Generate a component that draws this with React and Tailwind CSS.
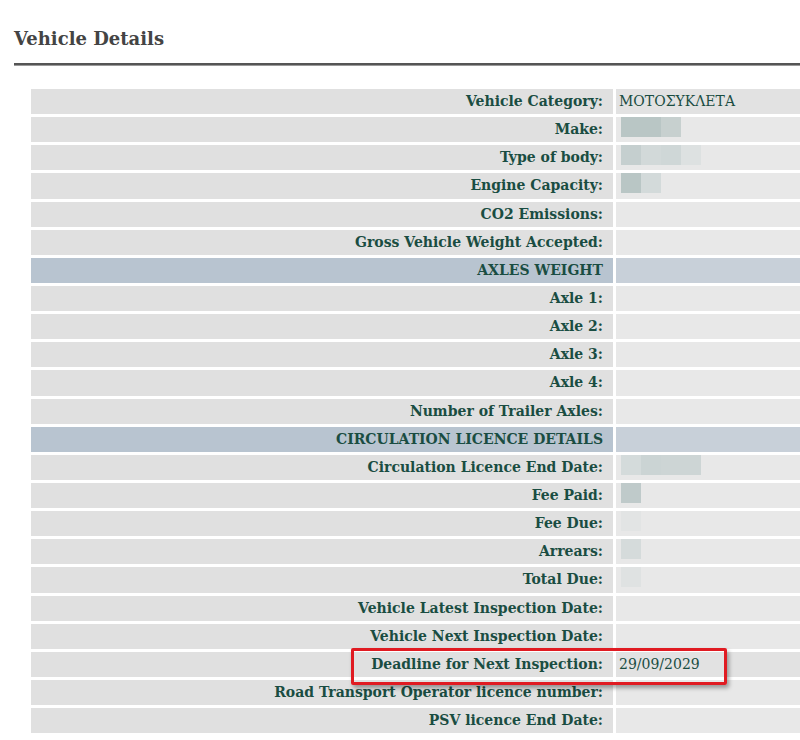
import React from "react";

const rows = [
  { label: "Vehicle Category:", value: "ΜΟΤΟΣΥΚΛΕΤΑ" },
  { label: "Make:", blur: [["#b9c6c5", 40], ["#c7d0cf", 20]] },
  { label: "Type of body:", blur: [["#c5cfcf", 20], ["#d2d9d9", 20], ["#cfd7d7", 20], ["#dde1e1", 20]] },
  { label: "Engine Capacity:", blur: [["#b9c6c5", 20], ["#d3dada", 20]] },
  { label: "CO2 Emissions:" },
  { label: "Gross Vehicle Weight Accepted:" },
  { label: "AXLES WEIGHT", header: true },
  { label: "Axle 1:" },
  { label: "Axle 2:" },
  { label: "Axle 3:" },
  { label: "Axle 4:" },
  { label: "Number of Trailer Axles:" },
  { label: "CIRCULATION LICENCE DETAILS", header: true },
  { label: "Circulation Licence End Date:", blur: [["#d4dbdb", 20], ["#cbd4d4", 20], ["#cdd5d5", 40]] },
  { label: "Fee Paid:", blur: [["#bfcaca", 20]] },
  { label: "Fee Due:", blur: [["#e2e4e4", 20]] },
  { label: "Arrears:", blur: [["#d5dbdb", 20]] },
  { label: "Total Due:", blur: [["#dfe2e2", 20]] },
  { label: "Vehicle Latest Inspection Date:" },
  { label: "Vehicle Next Inspection Date:" },
  { label: "Deadline for Next Inspection:", value: "29/09/2029" },
  { label: "Road Transport Operator licence number:" },
  { label: "PSV licence End Date:" },
];

const App = () => {
  return (
    <div className="w-[800px] h-[740px] overflow-hidden bg-white font-['DejaVu_Serif',serif]">
      <div className="pl-[14px]">
        <h2 className="pt-[27px] pb-[12px] text-[18px] leading-[24px] font-bold text-[#444444]">
          Vehicle Details
        </h2>
        <div className="h-[3px] border-t-2 border-[#555555] border-b border-b-[#9a9a9a]" />
      </div>

      <div className="relative ml-[31px] mt-[23px] w-[800px]">
        <div className="grid grid-cols-[582px_1fr] gap-x-[3px] gap-y-[3px]">
          {rows.map((row) => (
            <React.Fragment key={row.label}>
              <div
                className={
                  row.header
                    ? "h-[25.15px] bg-[#b8c4d0] pr-[10px] text-right text-[14px] leading-[25px] font-bold text-[#1a4d42]"
                    : "h-[25.15px] bg-[#e0e0e0] pr-[10px] text-right text-[14px] leading-[25px] font-bold text-[#1a4d42]"
                }
              >
                {row.label}
              </div>
              <div
                className={
                  row.header
                    ? "h-[25.15px] bg-[#c8d0d9]"
                    : row.value
                    ? "h-[25.15px] bg-[#e2e2e2] pl-[3px] text-[14px] leading-[25px] text-[#1a4d42]"
                    : "h-[25.15px] bg-[#e8e8e8] flex items-start pl-[5px]"
                }
              >
                {row.value}
                {row.blur &&
                  row.blur.map(([color, w], i) => (
                    <div
                      key={i}
                      className="h-[20px]"
                      style={{ backgroundColor: color, width: w }}
                    />
                  ))}
              </div>
            </React.Fragment>
          ))}
        </div>

        <div className="absolute left-[320px] top-[559px] w-[376px] h-[37px] border-[3px] border-[#e01b22] rounded-[2px] shadow-[2px_3px_4px_rgba(0,0,0,0.35)]" />
      </div>
    </div>
  );
};

export default App;
